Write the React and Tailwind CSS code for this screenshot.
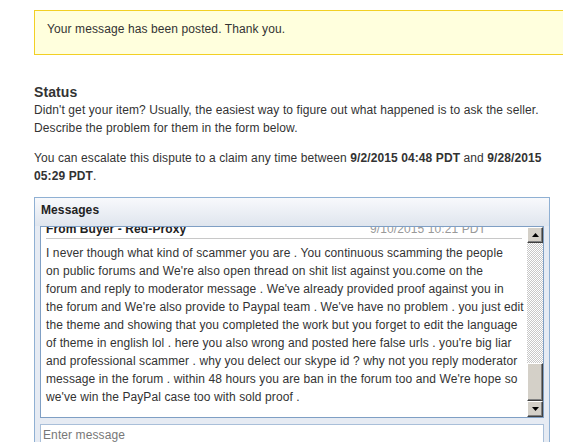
const messageLines = [
  'I never though what kind of scammer you are . You continuous scamming the people',
  "on public forums and We're also open thread on shit list against you.come on the",
  "forum and reply to moderator message . We've already provided proof against you in",
  "the forum and We're also provide to Paypal team . We've have no problem . you just edit",
  'the theme and showing that you completed the work but you forget to edit the language',
  "of theme in english lol . here you also wrong and posted here false urls . you're big liar",
  'and professional scammer . why you delect our skype id ? why not you reply moderator',
  "message in the forum . within 48 hours you are ban in the forum too and We're hope so",
  "we've win the PayPal case too with sold proof .",
];

function ScrollButton({ dir }) {
  return (
    <div className="h-[16px] w-full flex items-center justify-center bg-[#d4d0c8] border border-t-white border-l-white border-r-[#404040] border-b-[#404040] shadow-[inset_-1px_-1px_0_#808080]">
      <svg width="7" height="4" viewBox="0 0 7 4">
        {dir === 'up' ? (
          <path d="M3.5 0 L7 4 L0 4 Z" fill="#000" />
        ) : (
          <path d="M0 0 L7 0 L3.5 4 Z" fill="#000" />
        )}
      </svg>
    </div>
  );
}

export default function App() {
  return (
    <div
      className="w-[563px] h-[442px] overflow-hidden bg-white text-[#333] text-[12px] leading-[18px] tracking-[0.1px]"
      style={{ fontFamily: '"Liberation Sans", Arial, sans-serif' }}
    >
      <div className="pl-[34px] pt-[10px]">
        {/* notice */}
        <div className="w-[560px] h-[45px] border border-[#f2d024] bg-[#ffffdd] pl-[12px] pt-[9px]">
          Your message has been posted. Thank you.
        </div>

        {/* status */}
        <div className="mt-[28px] pr-[10px]">
          <h2 className="text-[14px] leading-[18px] font-bold">Status</h2>
          <p className="whitespace-nowrap">
            Didn't get your item? Usually, the easiest way to figure out what happened is to ask the seller.
            <br />
            Describe the problem for them in the form below.
          </p>
          <p className="mt-[12px] whitespace-nowrap">
            You can escalate this dispute to a claim any time between <b>9/2/2015 04:48 PDT</b> and{' '}
            <b>9/28/2015</b>
            <br />
            <b>05:29 PDT</b>.
          </p>
        </div>

        {/* messages panel */}
        <div className="mt-[12px] w-[516px] h-[260px] border border-[#8fb0d3] bg-[#e6ebf3]">
          <div className="h-[28px] pl-[6px] pt-[3px] font-bold text-[#222] bg-gradient-to-b from-[#f8f9fc] to-[#dfe5ee]">
            Messages
          </div>
          <div className="mx-[5px] h-[192px] flex border border-[#7f9fc4] bg-white">
            <div className="flex-1 overflow-hidden">
              <div className="-mt-[7px] pl-[5px] pr-[5px]">
                <div className="h-[19px] flex justify-between border-b border-[#c8c8c8]">
                  <span className="font-bold text-[#222]">From Buyer - Red-Proxy</span>
                  <span className="text-[#999] pr-[36px]">9/10/2015 10:21 PDT</span>
                </div>
                <div className="pt-[5px]">
                  {messageLines.map((line, i) => (
                    <div key={i} className="whitespace-nowrap">
                      {line}
                    </div>
                  ))}
                </div>
              </div>
            </div>
            <div className="w-[16px] flex flex-col">
              <ScrollButton dir="up" />
              <div className="h-[120px] bg-[repeating-conic-gradient(#c8c8c8_0_25%,#ffffff_0_50%)] bg-[length:2px_2px]" />
              <div className="flex-1 bg-[#d4d0c8] border border-t-white border-l-white border-r-[#404040] border-b-[#404040] shadow-[inset_-1px_-1px_0_#808080]" />
              <ScrollButton dir="down" />
            </div>
          </div>
          <div className="mx-[5px] mt-[6px] h-[40px] border border-[#a9bfd9] bg-white px-[2px] pt-[1px] text-[#777]">
            Enter message
          </div>
        </div>
      </div>
    </div>
  );
}
